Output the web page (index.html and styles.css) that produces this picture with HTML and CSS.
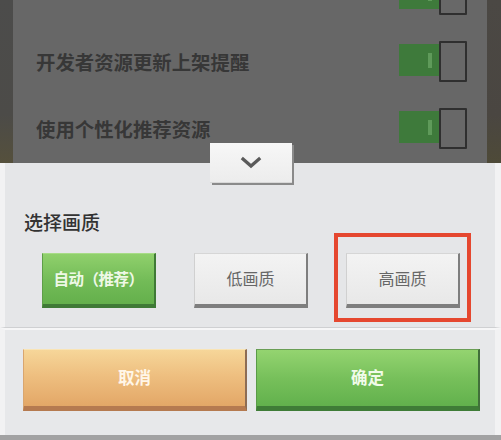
FILE: index.html
```html
<!DOCTYPE html>
<html lang="zh-CN">
<head>
<meta charset="utf-8">
<title>选择画质</title>
<link rel="stylesheet" href="styles.css">
</head>
<body>
<div class="screen">
  <div class="backdrop">
    <div class="side side-left"></div>
    <div class="list">
      <div class="row">
        <span class="label"></span>
        <div class="toggle"><div class="track"><i></i></div><div class="knob"></div></div>
      </div>
      <div class="row">
        <span class="label">开发者资源更新上架提醒</span>
        <div class="toggle"><div class="track"><i></i></div><div class="knob"></div></div>
      </div>
      <div class="row">
        <span class="label">使用个性化推荐资源</span>
        <div class="toggle"><div class="track"><i></i></div><div class="knob"></div></div>
      </div>
    </div>
    <div class="side side-right"></div>
  </div>
  <div class="sheet">
    <button class="handle" aria-label="收起">
      <svg width="82" height="40" viewBox="0 0 82 40"><path d="M33 16 L41 23 L49 16" fill="none" stroke="#5a5a5a" stroke-width="3.2" stroke-linecap="square"/></svg>
    </button>
    <div class="quality">
      <h2 class="title">选择画质</h2>
      <div class="options">
        <button class="opt opt-green">自动（推荐）</button>
        <button class="opt opt-gray">低画质</button>
        <button class="opt opt-gray opt-marked">高画质</button>
      </div>
    </div>
    <div class="actions">
      <button class="act act-cancel">取消</button>
      <button class="act act-ok">确定</button>
    </div>
    <div class="foot"></div>
  </div>
</div>
</body>
</html>
```

FILE: styles.css
```css
* { box-sizing: border-box; }
html, body { margin: 0; padding: 0; }
body {
  width: 501px;
  height: 440px;
  overflow: hidden;
  font-family: "Noto Sans CJK SC", "Noto Sans", sans-serif;
  background: #e5e6e8;
}
.screen {
  width: 501px;
  height: 440px;
  display: flex;
  flex-direction: column;
}
.backdrop {
  height: 163px;
  display: flex;
  background: #676767;
  overflow: hidden;
}
.side-left {
  width: 13px;
  background: linear-gradient(#4c4c4b 0%, #4c4b48 70%, #55503c 100%);
}
.side-right {
  width: 14px;
  background: linear-gradient(#4b4844 0%, #4a4641 70%, #4e4a38 100%);
}
.list {
  flex: 1;
  display: flex;
  flex-direction: column;
  padding: 0 20px 0 23px;
}
.row {
  height: 67px;
  flex: none;
  display: flex;
  align-items: center;
  justify-content: space-between;
}
.row:first-child { margin-top: -39px; }
.label {
  font-size: 19.4px;
  line-height: 24px;
  font-weight: 700;
  color: #373737;
}
.toggle {
  display: flex;
  align-items: center;
}
.track {
  width: 40px;
  height: 32px;
  margin-bottom: 3px;
  background: #3e7a3b;
  display: flex;
  align-items: center;
  padding-left: 29px;
}
.track i {
  display: block;
  width: 4px;
  height: 15px;
  background: #5f9a5a;
}
.knob {
  width: 28px;
  height: 41px;
  border: 2px solid #2f2f2f;
  background: #686868;
  border-radius: 1px;
}
.sheet {
  position: relative;
  flex: 1;
  display: flex;
  flex-direction: column;
}
.handle {
  position: absolute;
  left: 210px;
  top: -20px;
  width: 82px;
  height: 40px;
  padding: 0;
  border: none;
  background: linear-gradient(#f7f7f7, #ececec);
  box-shadow: 2px 2px 0 #8a8a8a, inset 0 -1px 0 #d8d8d8;
  z-index: 2;
}
.handle svg { display: block; }
.quality {
  height: 165px;
  background: #e5e6e8;
  border-left: 5px solid #f2f2f3;
  border-right: 6px solid #f2f2f3;
  border-bottom: 1px solid #cfd0d2;
  padding: 48px 0 0 19px;
}
.title {
  margin: 0;
  font-size: 19px;
  line-height: 21px;
  font-weight: 500;
  color: #333;
}
.options {
  display: flex;
  gap: 38px;
  margin-top: 21px;
  padding-left: 18px;
}
.opt {
  width: 114px;
  height: 55px;
  font-family: inherit;
  font-size: 16px;
  padding: 0 0 2px 0;
  display: flex;
  align-items: center;
  justify-content: center;
}
.opt-green {
  background: linear-gradient(#90d06c, #72bb57 55%, #64b04c);
  border-top: 1px solid #a7dc86;
  border-left: 1px solid #5e9e48;
  border-right: 2px solid #3f7a36;
  border-bottom: 4px solid #3f7a36;
  color: #eef8e6;
  font-weight: 700;
  font-size: 15.5px;
  letter-spacing: -0.5px;
}
.opt-gray {
  background: linear-gradient(#f3f3f3, #e8e8e8);
  border-top: 1px solid #d6d6d6;
  border-left: 1px solid #d0d0d0;
  border-right: 2px solid #7e7e7e;
  border-bottom: 4px solid #7e7e7e;
  color: #666;
}
.opt-marked { position: relative; }
.opt-marked::after {
  content: "";
  position: absolute;
  left: -13px;
  top: -21px;
  right: -13px;
  bottom: -18px;
  border: 4px solid #e5472f;
}
.actions {
  flex: 1;
  display: flex;
  gap: 9px;
  background: #e7e8ea;
  border-top: 2px solid #f6f6f7;
  border-left: 5px solid #f2f2f3;
  border-right: 6px solid #f2f2f3;
  padding: 19px 0 0 18px;
}
.act {
  width: 224px;
  height: 62px;
  font-family: inherit;
  font-size: 16.5px;
  font-weight: 700;
  padding: 0 0 3px 0;
  display: flex;
  align-items: center;
  justify-content: center;
}
.act-cancel {
  background: linear-gradient(#f6d699, #eebf80 45%, #e3a767);
  border-top: 1px solid #f9e4b6;
  border-left: 1px solid #d9a670;
  border-right: 2px solid #8d6c54;
  border-bottom: 5px solid #b57a50;
  color: #fff6e8;
}
.act-ok {
  background: linear-gradient(#94d470, #77c05b 50%, #62b14d);
  border-top: 1px solid #6a9e55;
  border-left: 1px solid #5a9b48;
  border-right: 2px solid #416f3a;
  border-bottom: 5px solid #3f7c37;
  color: #f1fbe9;
}
.foot {
  height: 5px;
  background: #a2a2a3;
}
```
